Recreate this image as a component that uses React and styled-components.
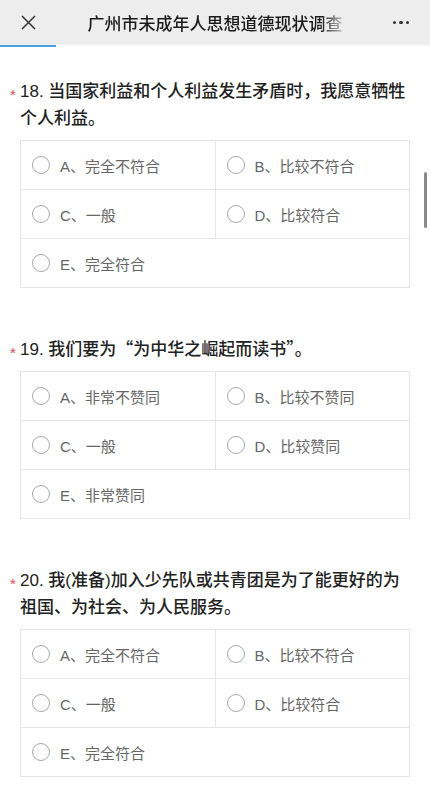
import React from "react";
import styled, { createGlobalStyle } from "styled-components";

const Global = createGlobalStyle`
  html, body { margin: 0; padding: 0; background: #fff; }
  body { font-family: "Liberation Sans", "Noto Sans CJK SC", sans-serif; }
  * { box-sizing: border-box; }
`;

const Page = styled.div`
  position: relative;
  width: 430px;
  height: 800px;
  overflow: hidden;
  background: #fff;
`;

const Header = styled.header`
  height: 45px;
  background: #ededed;
  display: grid;
  grid-template-columns: 60px 1fr 60px;
  align-items: center;
`;

const IconBtn = styled.div`
  display: flex;
  align-items: center;
  justify-content: ${(p) => p.$align || "center"};
  padding: ${(p) => p.$pad || "0"};
  height: 100%;
`;

const Title = styled.div`
  justify-self: center;
  font-size: 17px;
  font-weight: 500;
  color: #1a1a1a;
  white-space: nowrap;
  -webkit-mask-image: linear-gradient(to right, #000 calc(100% - 22px), rgba(0,0,0,0.2));
  mask-image: linear-gradient(to right, #000 calc(100% - 22px), rgba(0,0,0,0.2));
`;

const Dots = styled.div`
  display: flex;
  gap: 3px;
  span {
    width: 3.5px;
    height: 3.5px;
    border-radius: 50%;
    background: #333;
  }
`;

const Progress = styled.div`
  height: 2px;
  background: #fff;
`;

const ProgressFill = styled.div`
  height: 100%;
  background: #4aa3e0;
`;

const Content = styled.main`
  padding-top: 31px;
  display: flex;
  flex-direction: column;
  gap: 48px;
`;

const Question = styled.section`
  display: flex;
  flex-direction: column;
  gap: 8px;
`;

const QHead = styled.div`
  display: flex;
  align-items: flex-start;
  padding: 0 18px 0 10px;
`;

const Star = styled.span`
  flex: none;
  width: 10px;
  height: 27px;
  padding-top: 6px;
  font-size: 15px;
  line-height: 21px;
  color: #e5484d;
`;

const QTitle = styled.div`
  flex: 1;
  font-size: 17px;
  line-height: 27px;
  font-weight: 500;
  color: #222;
`;

const Quote = styled.span`
  font-family: "Noto Sans CJK SC", sans-serif;
  line-height: 1;
`;

const Grid = styled.div`
  margin: 0 20px;
  display: grid;
  grid-template-columns: 1fr 1fr;
  border-top: 1px solid #e6e6e6;
  border-left: 1px solid #e6e6e6;
`;

const Cell = styled.label`
  grid-column: ${(p) => (p.$full ? "1 / span 2" : "auto")};
  height: 49px;
  display: flex;
  align-items: center;
  gap: 10px;
  padding-left: 11px;
  border-right: 1px solid #e6e6e6;
  border-bottom: 1px solid #e6e6e6;
  font-size: 15px;
  color: #666;
`;

const Radio = styled.span`
  width: 18px;
  height: 18px;
  border-radius: 50%;
  border: 1px solid #a8a8a8;
  flex: none;
`;

const Scrollbar = styled.div`
  position: absolute;
  right: 3px;
  top: 172px;
  width: 3px;
  height: 56px;
  border-radius: 2px;
  background: #8a8a8a;
`;

const questions = [
  {
    n: 18,
    text: "当国家利益和个人利益发生矛盾时，我愿意牺牲个人利益。",
    opts: ["A、完全不符合", "B、比较不符合", "C、一般", "D、比较符合", "E、完全符合"],
  },
  {
    n: 19,
    text: (
      <>
        我们要为<Quote>“</Quote>为中华之崛起而读书<Quote>”</Quote>。
      </>
    ),
    opts: ["A、非常不赞同", "B、比较不赞同", "C、一般", "D、比较赞同", "E、非常赞同"],
  },
  {
    n: 20,
    text: "我(准备)加入少先队或共青团是为了能更好的为祖国、为社会、为人民服务。",
    opts: ["A、完全不符合", "B、比较不符合", "C、一般", "D、比较符合", "E、完全符合"],
  },
];

export default function App() {
  return (
    <Page>
      <Global />
      <Header>
        <IconBtn $align="flex-start" $pad="0 0 0 21px">
          <svg width="15" height="15" viewBox="0 0 15 15">
            <path d="M1 1L14 14M14 1L1 14" stroke="#333" strokeWidth="1.5" fill="none" />
          </svg>
        </IconBtn>
        <Title>广州市未成年人思想道德现状调查</Title>
        <IconBtn $align="flex-end" $pad="0 21px 0 0">
          <Dots>
            <span />
            <span />
            <span />
          </Dots>
        </IconBtn>
      </Header>
      <Progress>
        <ProgressFill style={{ width: "56px" }} />
      </Progress>
      <Content>
        {questions.map((q) => (
          <Question key={q.n}>
            <QHead>
              <Star>*</Star>
              <QTitle>
                {typeof q.text === "string" ? `${q.n}. ${q.text}` : <>{`${q.n}. `}{q.text}</>}
              </QTitle>
            </QHead>
            <Grid>
              {q.opts.map((o, i) => (
                <Cell key={o} $full={i === 4}>
                  <Radio />
                  {o}
                </Cell>
              ))}
            </Grid>
          </Question>
        ))}
      </Content>
      <Scrollbar />
    </Page>
  );
}
